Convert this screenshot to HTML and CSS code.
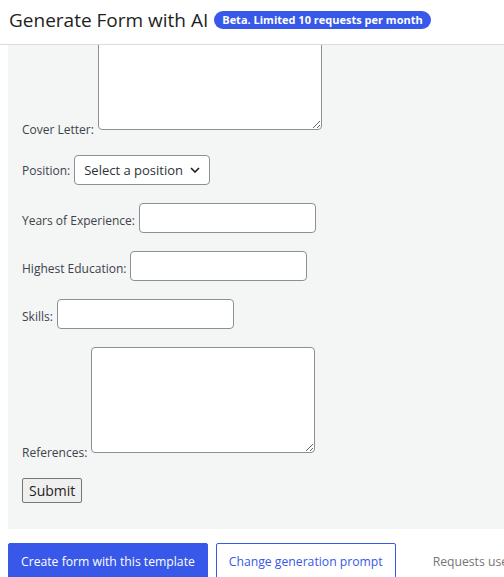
FILE: index.html
```html
<!DOCTYPE html>
<html lang="en">
<head>
  <meta charset="UTF-8">
  <title>Generate Form with AI</title>
  <link rel="stylesheet" href="styles.css">
</head>
<body>
  <div class="modal-head">
    <h1>Generate Form with AI</h1>
    <span class="badge">Beta. Limited 10 requests per month</span>
  </div>

  <div class="preview">
    <form class="demo-form" onsubmit="return false">
      <div class="row tall">
        <label for="cover">Cover Letter:</label>
        <textarea id="cover"></textarea>
      </div>
      <div class="row">
        <label for="position">Position:</label>
        <div class="select">
          <span>Select a position</span>
          <svg width="10" height="6" viewBox="0 0 10 6"><path d="M1 1l4 4 4-4" fill="none" stroke="#1e1e1e" stroke-width="1.6"/></svg>
        </div>
      </div>
      <div class="row field">
        <label for="years">Years of Experience:</label>
        <input type="text" id="years">
      </div>
      <div class="row field">
        <label for="edu">Highest Education:</label>
        <input type="text" id="edu">
      </div>
      <div class="row field">
        <label for="skills">Skills:</label>
        <input type="text" id="skills">
      </div>
      <div class="row tall">
        <label for="refs">References:</label>
        <textarea id="refs"></textarea>
      </div>
      <button class="submit">Submit</button>
    </form>
  </div>

  <div class="actions">
    <button class="primary">Create form with this template</button>
    <button class="secondary">Change generation prompt</button>
    <span class="usage">Requests used: 0 / 10</span>
  </div>
</body>
</html>
```

FILE: styles.css
```css
* {
  box-sizing: border-box;
}

body {
  margin: 0;
  font-family: 'Open Sans', 'Noto Sans', sans-serif;
  color: #1e1e1e;
  background: #fff;
  overflow: hidden;
}

.modal-head {
  height: 45px;
  display: flex;
  align-items: center;
  gap: 6px;
  padding: 0 9px 4px;
  border-bottom: 1px solid #dcdcde;
}

.modal-head h1 {
  margin: 0;
  font-size: 19px;
  font-weight: 400;
  color: #1e1e1e;
}

.badge {
  background: #3858e9;
  color: #fff;
  font-size: 11px;
  font-weight: 700;
  line-height: 18px;
  padding: 0 8px;
  border-radius: 9px;
  white-space: nowrap;
}

.preview {
  margin-left: 8px;
  height: 484px;
  background: #f4f5f5;
  overflow: hidden;
}

.demo-form {
  margin-top: -21px;
  padding: 0 14px;
  font-size: 12px;
  color: #3c434a;
}

.row {
  display: flex;
  align-items: center;
  gap: 4px;
  margin-bottom: 18px;
}

.row.field label {
  margin-top: 4px;
}

.row.tall {
  align-items: flex-end;
  margin-bottom: 25px;
}

.row.tall label {
  margin-bottom: -8px;
}

textarea {
  width: 224px;
  height: 106px;
  border: 1px solid #8c8f94;
  border-radius: 4px;
  background: #fff;
  margin: 0;
}

input {
  width: 177px;
  height: 30px;
  border: 1px solid #8c8f94;
  border-radius: 4px;
  background: #fff;
  margin: 0;
}

.select {
  width: 136px;
  height: 30px;
  display: flex;
  align-items: center;
  justify-content: space-between;
  padding: 0 9px 0 9px;
  border: 1px solid #8c8f94;
  border-radius: 4px;
  background: #fff;
  font-size: 13px;
  color: #2c3338;
}

.submit {
  height: 25px;
  padding: 0 6px;
  font-family: inherit;
  font-size: 14px;
  color: #1e1e1e;
  background: #efefef;
  border: 1px solid #767676;
  border-radius: 2px;
}

.actions {
  display: flex;
  align-items: center;
  gap: 8px;
  padding: 14px 0 0 8px;
  white-space: nowrap;
}

.actions button {
  height: 36px;
  padding: 0 12px;
  font-family: inherit;
  font-size: 12.2px;
  border-radius: 2px;
}

.primary {
  background: #3858e9;
  color: #fff;
  border: 1px solid #3858e9;
}

.secondary {
  background: #fff;
  color: #3858e9;
  border: 1px solid #3858e9;
}

.usage {
  margin-left: 29px;
  font-size: 12.2px;
  color: #757575;
}
```
